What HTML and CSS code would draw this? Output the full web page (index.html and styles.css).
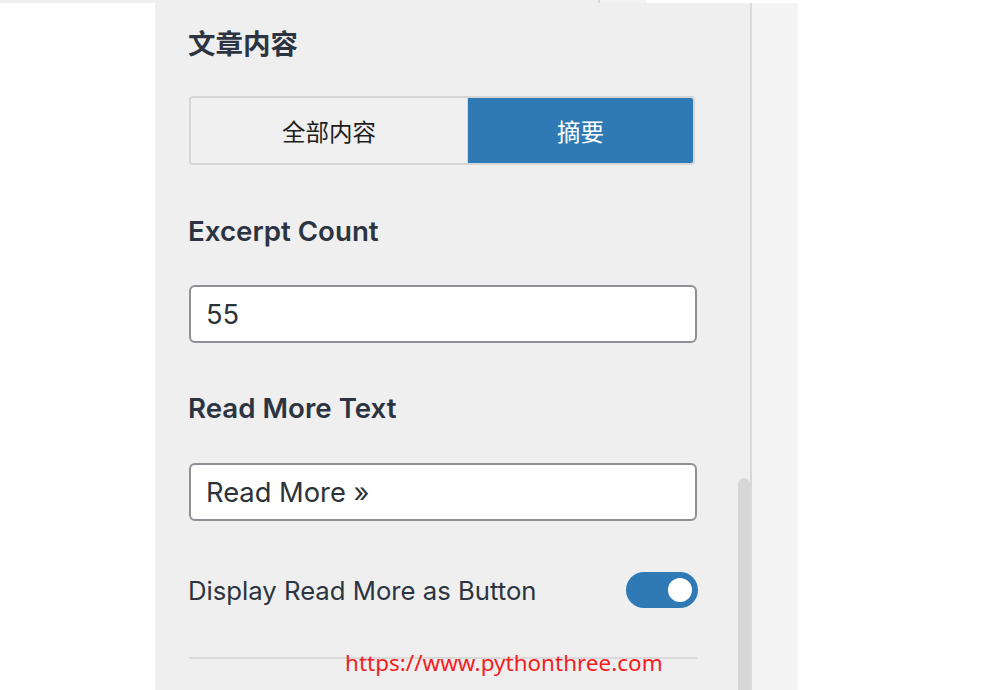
FILE: index.html
```html
<!DOCTYPE html>
<html lang="zh">
<head>
<meta charset="utf-8">
<title>文章内容</title>
<link rel="stylesheet" href="styles.css">
</head>
<body>
<div class="topstrip">
  <div class="ts-gray"></div>
  <div class="ts-line"></div>
  <div class="ts-light"></div>
</div>
<div class="main">
  <div class="leftgap"></div>
  <div class="panel">
    <h2 class="heading title">文章内容</h2>
    <div class="segmented">
      <div class="seg seg-left">全部内容</div>
      <div class="seg seg-right">摘要</div>
    </div>
    <h2 class="heading label">Excerpt Count</h2>
    <div class="field">55</div>
    <h2 class="heading label label2">Read More Text</h2>
    <div class="field field2">Read More »</div>
    <div class="toggle-row">
      <span class="toggle-text">Display Read More as Button</span>
      <span class="toggle"><span class="knob"></span></span>
    </div>
    <div class="divider"></div>
    <div class="thumb"></div>
  </div>
  <div class="rightstrip"></div>
</div>
<div class="watermark">https://www.pythonthree.com</div>
</body>
</html>
```
FILE: styles.css
```css
html, body {
  margin: 0;
  padding: 0;
}
body {
  width: 1007px;
  height: 690px;
  overflow: hidden;
  background: #ffffff;
  font-family: Inter, "Noto Sans CJK SC", sans-serif;
  color: #2c3441;
  position: relative;
}
.topstrip {
  display: flex;
  height: 3px;
}
.ts-gray {
  width: 598px;
  background: #efefef;
}
.ts-line {
  width: 2px;
  background: #d6d6d6;
}
.ts-light {
  width: 46px;
  background: #f3f3f3;
}
.main {
  display: flex;
  height: 687px;
}
.leftgap {
  width: 155px;
  background: #ffffff;
}
.panel {
  position: relative;
  width: 561px;
  padding: 0 0 0 34px;
  background: #efefef;
  border-right: 2px solid #d9d9d9;
}
.rightstrip {
  width: 46px;
  background: #f4f4f4;
}
.heading {
  margin: 0 0 0 -1px;
  font-weight: 600;
  line-height: 36px;
  color: #2c3441;
}
.title {
  margin-top: 21px;
  font-size: 27.5px;
  font-weight: 700;
  font-family: "Noto Sans CJK SC", sans-serif;
}
.segmented {
  display: flex;
  width: 506px;
  height: 69px;
  margin-top: 36px;
  box-sizing: border-box;
  border: 2px solid #d5d5d5;
  border-radius: 4px;
  overflow: hidden;
  font-family: "Noto Sans CJK SC", sans-serif;
  font-size: 23.5px;
}
.seg {
  display: flex;
  align-items: center;
  justify-content: center;
}
.seg-left {
  width: 276px;
  background: #f0f0f0;
  color: #1e1e1e;
  border-right: 1px solid #d5d5d5;
}
.seg-right {
  flex: 1;
  background: #2f7ab5;
  color: #ffffff;
}
.label {
  margin-top: 48px;
  font-size: 27.7px;
}
.label2 {
  margin-top: 47px;
}
.field {
  width: 508px;
  height: 58px;
  margin-top: 36px;
  box-sizing: border-box;
  border: 2px solid #8d9095;
  border-radius: 6px;
  background: #ffffff;
  padding: 0 0 0 15px;
  display: flex;
  align-items: center;
  font-size: 27.3px;
  color: #2c3338;
}
.field2 {
  margin-top: 37px;
}
.toggle-row {
  display: flex;
  align-items: center;
  justify-content: space-between;
  width: 509px;
  height: 36px;
  margin-top: 51px;
}
.toggle-text {
  margin-left: -1px;
  font-size: 25.7px;
  color: #2c3441;
}
.toggle {
  display: flex;
  align-items: center;
  justify-content: flex-end;
  width: 72px;
  height: 36px;
  box-sizing: border-box;
  padding-right: 6px;
  border-radius: 18px;
  background: #2f7ab5;
}
.knob {
  width: 24px;
  height: 24px;
  border-radius: 50%;
  background: #ffffff;
}
.divider {
  width: 508px;
  margin-top: 49px;
  border-top: 2px solid #dadada;
}
.thumb {
  position: absolute;
  right: 0;
  top: 475px;
  bottom: 0;
  width: 12px;
  border-radius: 6px 6px 0 0;
  background: #d7d7d7;
}
.watermark {
  position: absolute;
  left: 345px;
  top: 651px;
  font-family: "Noto Sans", sans-serif;
  font-size: 22.4px;
  line-height: 24px;
  letter-spacing: 0.05px;
  color: #f51c1c;
}
```
